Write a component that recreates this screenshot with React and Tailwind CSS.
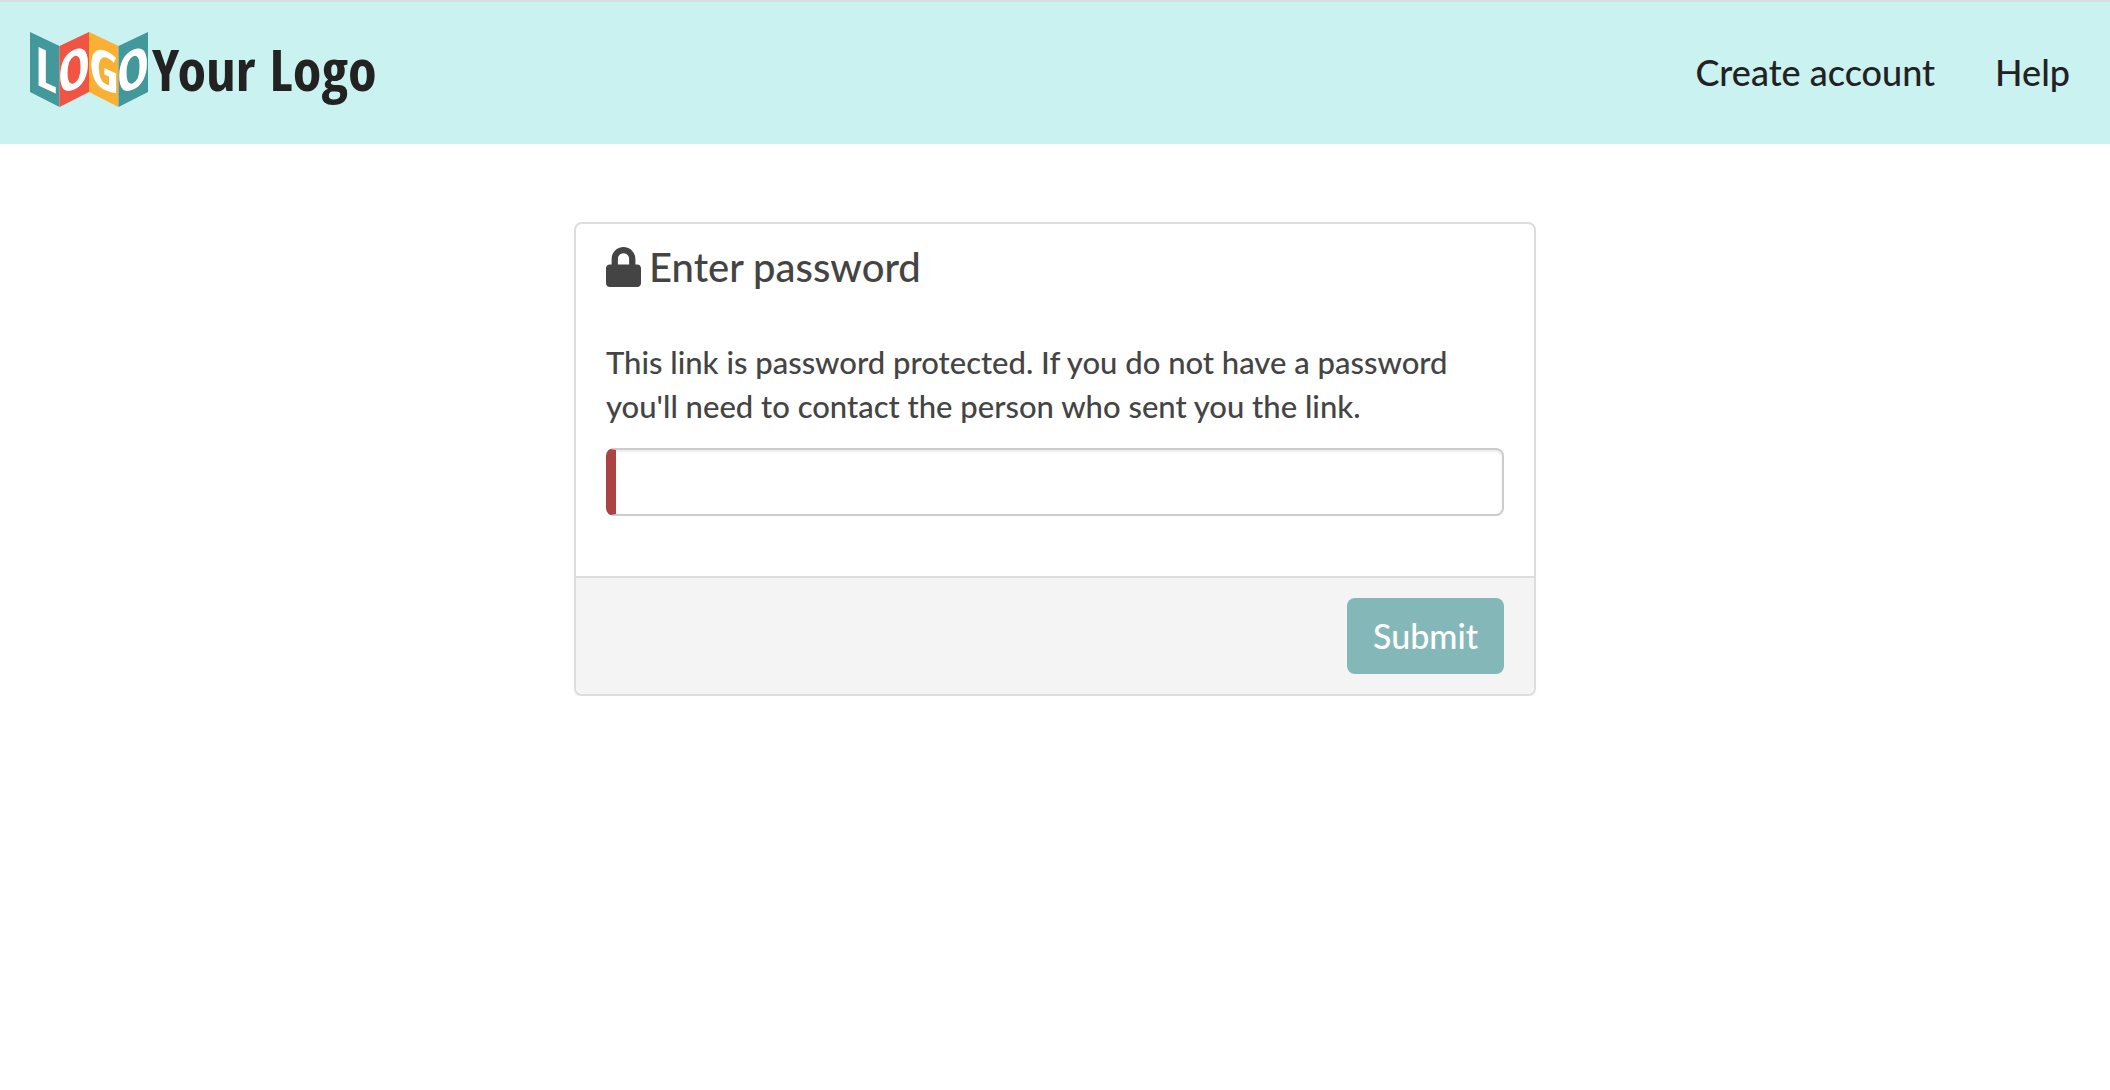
import { useState } from 'react';
import { FaLock } from 'react-icons/fa';

const NAV_LINKS = [
  { label: 'Create account', href: '#create-account' },
  { label: 'Help', href: '#help' },
];

// folded map: every panel slants the other way than its neighbour
const LOGO_PANELS = [
  { letter: 'L', points: '0,0 29.5,14 29.5,75 0,60', fill: '#42989a', transform: 'translate(16 57) skewY(25)' },
  { letter: 'O', points: '29.5,14 59,0 59,60 29.5,75', fill: '#f25444', transform: 'translate(44 57) skewY(-25)' },
  { letter: 'G', points: '59,0 88.5,14 88.5,75 59,60', fill: '#fab133', transform: 'translate(74 57) skewY(25)' },
  { letter: 'O', points: '88.5,14 118,0 118,60 88.5,75', fill: '#42989a', transform: 'translate(103 57) skewY(-25)' },
];

const Logo = () => (
  <a href="#home" className="flex items-center gap-1 pb-2 text-[#222222]">
    <svg width="118" height="75" viewBox="0 0 118 75" className="overflow-visible" aria-hidden="true">
      {LOGO_PANELS.map((panel, idx) => (
        <g key={idx}>
          <polygon points={panel.points} fill={panel.fill} />
          <text
            transform={panel.transform}
            textAnchor="middle"
            className="fill-white text-[54px] font-bold font-['Open_Sans_Condensed',sans-serif]"
          >
            {panel.letter}
          </text>
        </g>
      ))}
    </svg>
    <span className="text-[58px] leading-[60px] font-bold font-['Open_Sans_Condensed',sans-serif]">
      Your Logo
    </span>
  </a>
);

const App = () => {
  const [password, setPassword] = useState('');

  return (
    <div className="font-[Lato,sans-serif] font-medium text-[#444444]">
      <header className="flex items-center justify-between h-36 pl-[30px] pr-10 bg-[#caf2f0] border-t-2 border-[#d9dce0]">
        <Logo />
        <nav className="flex items-center gap-[60px] pb-0.5 text-4xl text-[#222222]">
          {NAV_LINKS.map(link => (
            <a key={link.label} href={link.href}>{link.label}</a>
          ))}
        </nav>
      </header>

      <main className="pt-[78px] px-8">
        <form
          onSubmit={(e) => e.preventDefault()}
          className="max-w-[962px] mx-auto bg-white border-2 border-[#dddddd] rounded-lg shadow-[0_2px_2px_rgba(0,0,0,0.05)] overflow-hidden"
        >
          <div className="px-[30px] pt-[21px] pb-[60px]">
            <h1 className="flex items-center gap-2 text-[40px] leading-[44px] font-medium">
              <FaLock className="h-10 w-[35px]" />
              Enter password
            </h1>
            <label htmlFor="password" className="block mt-[51px] mb-5 text-[31px] leading-[44px]">
              This link is password protected. If you do not have a password you'll need to contact the person who sent you the link.
            </label>
            <input
              id="password"
              type="password"
              value={password}
              onChange={(e) => setPassword(e.target.value)}
              className="block w-full h-[68px] px-6 text-[31px] bg-white border-2 border-l-10 border-[#cccccc] border-l-[#a94442] rounded-lg shadow-[inset_0_2px_2px_rgba(0,0,0,0.075)] outline-none"
            />
          </div>

          <div className="flex justify-end px-[30px] py-5 bg-[#f4f4f4] border-t-2 border-[#dddddd]">
            <button type="submit" className="h-[76px] px-[26px] pb-0.5 text-[34px] text-white bg-[#84b8b8] rounded-lg">
              Submit
            </button>
          </div>
        </form>
      </main>
    </div>
  );
};

export default App;
